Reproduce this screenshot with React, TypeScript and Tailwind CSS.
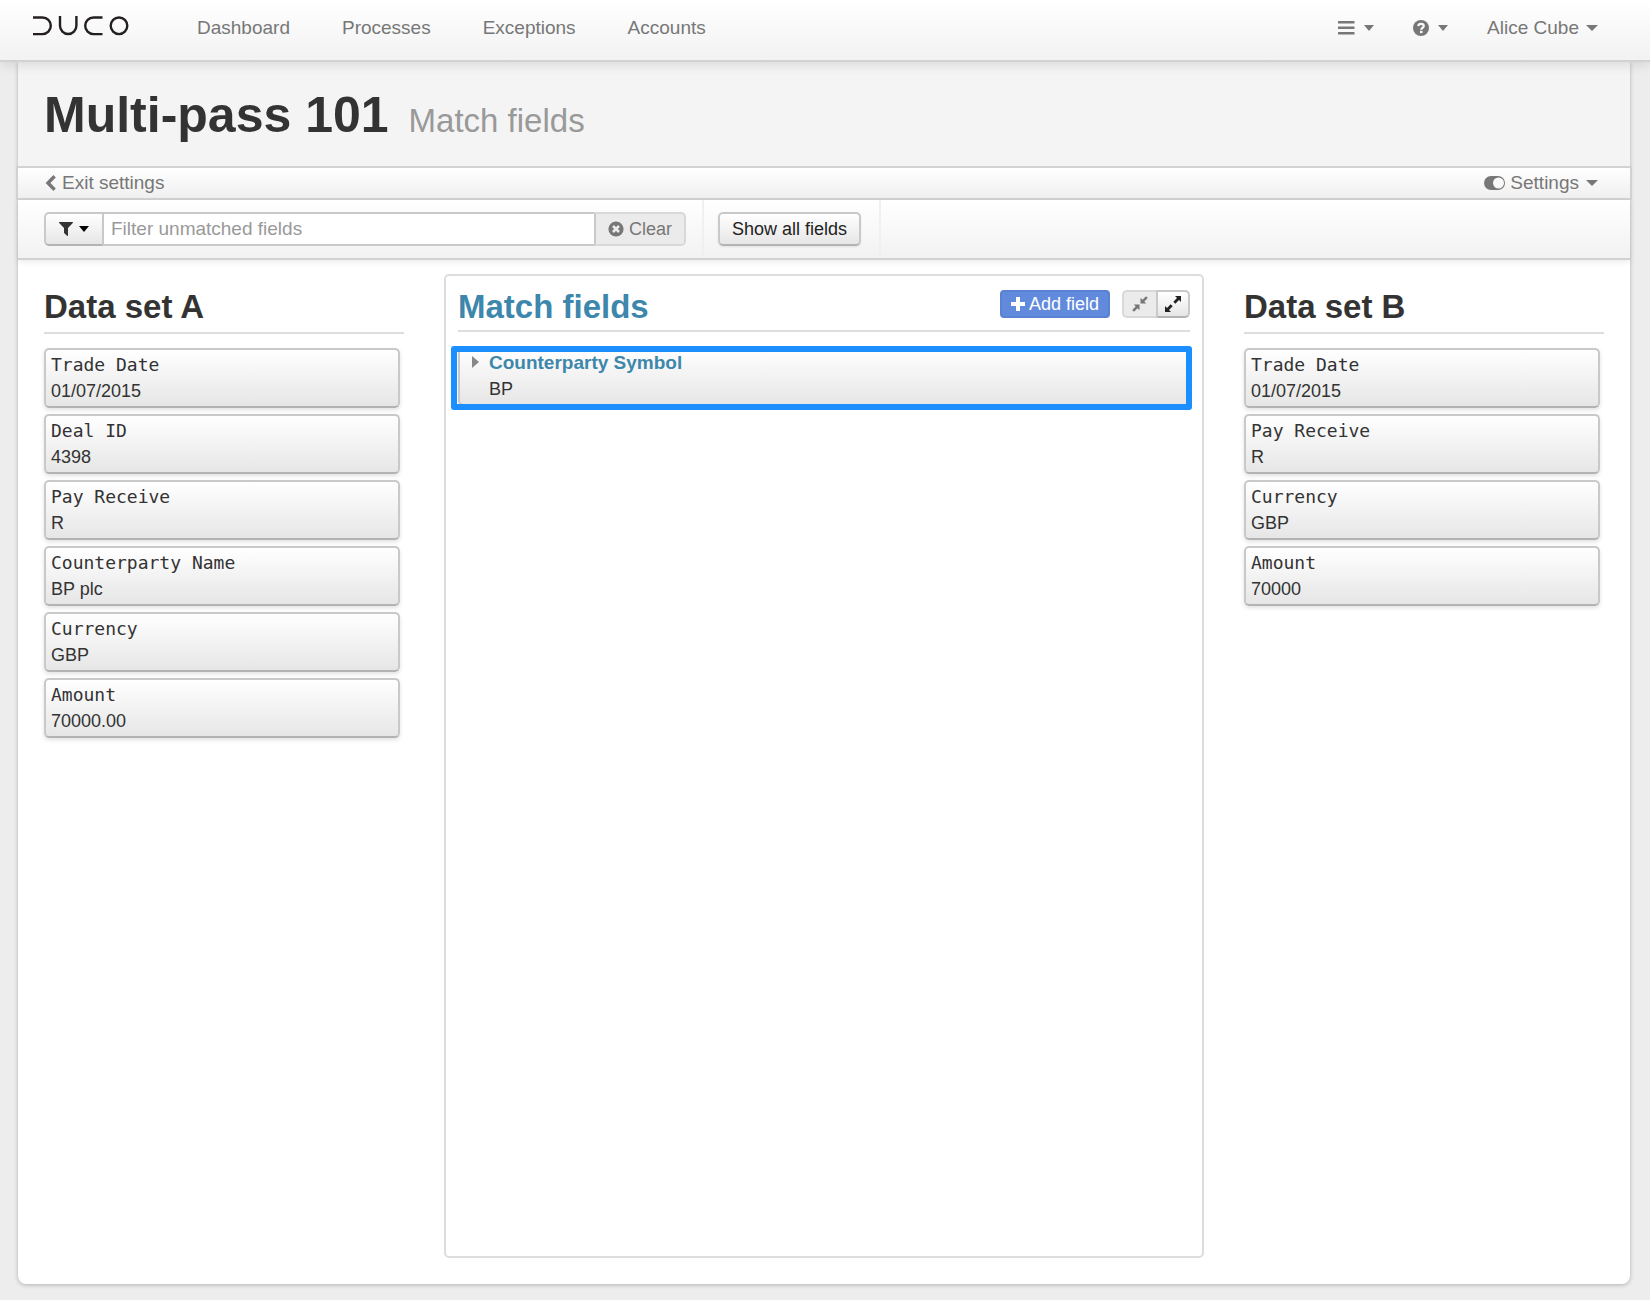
import React, { useState } from 'react';

type Field = { name: string; value: string };

const NAV_LINKS = ['Dashboard', 'Processes', 'Exceptions', 'Accounts'];

const DATA_SET_A: Field[] = [
  { name: 'Trade Date', value: '01/07/2015' },
  { name: 'Deal ID', value: '4398' },
  { name: 'Pay Receive', value: 'R' },
  { name: 'Counterparty Name', value: 'BP plc' },
  { name: 'Currency', value: 'GBP' },
  { name: 'Amount', value: '70000.00' },
];

const DATA_SET_B: Field[] = [
  { name: 'Trade Date', value: '01/07/2015' },
  { name: 'Pay Receive', value: 'R' },
  { name: 'Currency', value: 'GBP' },
  { name: 'Amount', value: '70000' },
];

const Logo = () => (
  <svg width="96" height="20" viewBox="0 0 96 20" fill="none" stroke="#231f20" strokeWidth="2.4">
    <path d="M0 1.500h9.500a8.300 8.300 0 0 1 0 16.600H0" />
    <path d="M27 0v9.800a8.200 8.200 0 0 0 16.400 0V0" />
    <path d="M69.500 1.500H60.500a8.300 8.300 0 0 0 0 16.600h9" />
    <circle cx="86" cy="9.8" r="8.3" />
  </svg>
);

const Caret = ({ small }: { small?: boolean }) =>
  small ? (
    <svg width="10" height="6" viewBox="0 0 10 6" fill="currentColor"><path d="M0 0h10L5 6z" /></svg>
  ) : (
    <svg width="12" height="6" viewBox="0 0 12 6" fill="currentColor"><path d="M0 0h12L6 6z" /></svg>
  );

const FieldCard = ({ field }: { field: Field }) => (
  <li className="rounded-[5px] border-2 border-[#c9c9c9] border-b-[#b3b3b3] bg-linear-to-b from-white to-[#e6e6e6] px-[5px] py-[2px] shadow-[0_2px_4px_rgba(0,0,0,0.12)]">
    <div className="font-['DejaVu_Sans_Mono',monospace] text-[18px] leading-[26px]">{field.name}</div>
    <div className="text-[18px] leading-[26px]">{field.value}</div>
  </li>
);

const DataSet = ({ title, fields }: { title: string; fields: Field[] }) => (
  <section className="pt-3">
    <h2 className="border-b-2 border-[#dddddd] pb-1 text-[33px] leading-[42px] font-bold">{title}</h2>
    <ul className="mt-[14px] mr-1 flex flex-col gap-[6px]">
      {fields.map((field) => (
        <FieldCard key={field.name} field={field} />
      ))}
    </ul>
  </section>
);

const App: React.FC = () => {
  const [filter, setFilter] = useState('');

  return (
    <div className="min-h-screen bg-[#ededed] pb-4 font-['Liberation_Sans',Arial,sans-serif] text-[#333333]">
      <header className="relative z-10 flex h-[62px] items-start border-b-2 border-[#d2d2d2] bg-linear-to-b from-white to-[#f2f2f2] pr-[52px] pl-[33px] shadow-[0_2px_12px_rgba(0,0,0,0.12)]">
        <a href="#home" aria-label="Duco" className="mt-4"><Logo /></a>
        <nav className="ml-[68px] flex gap-[52px] pt-4 text-[19px] leading-6 text-[#777777]">
          {NAV_LINKS.map((link) => (
            <a key={link} href={'#' + link.toLowerCase()}>{link}</a>
          ))}
        </nav>
        <div className="ml-auto flex items-center pt-4 text-[19px] leading-6 text-[#777777]">
          <button type="button" aria-label="Menu" className="flex h-6 items-center gap-[9px]">
            <svg width="17" height="14" viewBox="0 0 17 14" fill="currentColor">
              <rect width="16.500" height="2.500" rx=".5" y="0" />
              <rect width="16.500" height="2.500" rx=".5" y="5.500" />
              <rect width="16.500" height="2.500" rx=".5" y="11" />
            </svg>
            <Caret small />
          </button>
          <button type="button" aria-label="Help" className="ml-[39px] flex h-6 items-center gap-[9px]">
            <svg width="16" height="16" viewBox="0 0 16 16">
              <circle cx="8" cy="8" r="8" fill="currentColor" />
              <path d="M5.300 6.200C5.500 4.500 6.600 3.900 8 3.900c1.500 0 2.700.8 2.700 2.100 0 1.900-2.400 1.800-2.400 3.700" fill="none" stroke="#fafafa" strokeWidth="2.300" />
              <rect x="7" y="10.800" width="2.500" height="2.300" fill="#fafafa" />
            </svg>
            <Caret small />
          </button>
          <button type="button" className="ml-[39px] flex h-6 items-center gap-[7px]">
            Alice Cube <Caret />
          </button>
        </div>
      </header>

      <main className="mr-5 ml-[18px] rounded-b-lg bg-white pb-[26px] shadow-[0_1px_4px_rgba(0,0,0,0.25)]">
        <div className="flex h-[104px] items-baseline gap-5 bg-[#f4f4f4] px-[26px] pt-[23px]">
          <h1 className="text-[50px] leading-[60px] font-bold">Multi-pass 101</h1>
          <span className="text-[33px] text-[#999999]">Match fields</span>
        </div>

        <div className="-mx-[2px] flex h-[34px] items-center justify-between border-2 border-[#d2d2d2] bg-linear-to-b from-white to-[#f0f0f0] pr-8 pl-[27px] text-[19px] text-[#777777]">
          <a href="#exit" className="flex items-center gap-[6px]">
            <svg width="11" height="16" viewBox="0 0 11 16" fill="none" stroke="currentColor" strokeWidth="3.400"><path d="M9.600 1.300 3 8l6.600 6.700" /></svg>
            Exit settings
          </a>
          <button type="button" className="flex items-center gap-[5px]">
            <svg width="21" height="14" viewBox="0 0 21 14">
              <rect width="21" height="14" rx="7" fill="currentColor" />
              <circle cx="14.500" cy="7" r="5.500" fill="#fafafa" />
            </svg>
            <span className="flex items-center gap-[7px]">Settings <Caret /></span>
          </button>
        </div>

        <div className="flex h-[60px] border-b-2 border-[#d2d2d2] bg-linear-to-b from-white to-[#f2f2f2] pl-[26px] shadow-[0_2px_6px_rgba(0,0,0,0.08)]">
          <form className="flex h-[34px] w-[642px] self-center" onSubmit={(e) => e.preventDefault()}>
            <button type="button" aria-label="Filter by" className="flex w-[60px] items-center justify-center gap-[6px] rounded-l-[5px] border-2 border-[#c9c9c9] border-b-[#b3b3b3] bg-linear-to-b from-white to-[#e6e6e6]">
              <svg width="14" height="14" viewBox="0 0 14 14" fill="currentColor"><path d="M.6 0h12.800c.6 0 .8.700.4 1.100L9 6v7.400c0 .5-.6.700-1 .4l-2.700-2.500A1 1 0 0 1 5 10.600V6L.2 1.100C-.2.700 0 0 .6 0z" /></svg>
              <span className="text-black"><Caret small /></span>
            </button>
            <input
              type="text"
              aria-label="Filter unmatched fields"
              placeholder="Filter unmatched fields"
              value={filter}
              onChange={(e) => setFilter(e.target.value)}
              className="min-w-0 grow border-y-2 border-[#c9c9c9] bg-white px-[7px] text-[19px] outline-none placeholder:text-[#999999]"
            />
            <button type="button" onClick={() => setFilter('')} className="flex w-[92px] items-center justify-center gap-[5px] rounded-r-[5px] border-2 border-[#d8d8d8] border-l-[#c9c9c9] bg-[#ebebeb] text-[18px] text-[#777777]">
              <svg width="16" height="16" viewBox="0 0 16 16">
                <circle cx="8" cy="8" r="7.600" fill="currentColor" />
                <path d="m5 5 6 6m0-6-6 6" stroke="#ebebeb" strokeWidth="2.600" />
              </svg>
              Clear
            </button>
          </form>
          <div className="ml-4 flex items-center border-x-2 border-[#f0f0f0] pr-[18px] pl-[14px]">
            <button type="button" className="h-[34px] rounded-[5px] border-2 border-[#c9c9c9] border-b-[#b3b3b3] bg-linear-to-b from-white to-[#e6e6e6] px-3 text-[18px] text-[#222222] shadow-[0_1px_2px_rgba(0,0,0,0.08)]">
              Show all fields
            </button>
          </div>
        </div>

        <div className="grid grid-cols-[9fr_19fr_9fr] gap-10 px-[26px] pt-[14px]">
          <DataSet title="Data set A" fields={DATA_SET_A} />

          <section className="min-h-[984px] rounded-[5px] border-2 border-[#dddddd] px-3 pt-[10px]">
            <div className="flex items-start border-b-2 border-[#dddddd] pb-[2px]">
              <h2 className="text-[33px] leading-[42px] font-bold text-[#3d87ac]">Match fields</h2>
              <button type="button" className="mt-1 ml-auto flex h-7 items-center gap-1 rounded-[4px] border-2 border-[#5a82d2] bg-[#618add] px-[9px] text-[18px] text-white">
                <svg width="14" height="14" viewBox="0 0 14 14" stroke="currentColor" strokeWidth="4"><path d="M7 0v14M0 7h14" /></svg>
                Add field
              </button>
              <div className="mt-1 ml-3 flex h-7">
                <button type="button" aria-label="Collapse all" className="flex w-[34px] items-center justify-center rounded-l-[5px] border-2 border-r-0 border-[#d8d8d8] bg-[#ebebeb] text-[#777777]">
                  <svg width="16" height="16" viewBox="0 0 16 16" fill="currentColor">
                    <path d="M8.500 7.500V1.800l2 1.900L14 .2 15.800 2l-3.500 3.500 1.900 2zM7.500 8.500v5.700l-2-1.900L2 15.800.2 14l3.500-3.500-1.900-2z" />
                  </svg>
                </button>
                <button type="button" aria-label="Expand all" className="flex w-[34px] items-center justify-center rounded-r-[5px] border-2 border-[#c9c9c9] border-b-[#b3b3b3] bg-linear-to-b from-white to-[#e6e6e6] text-[#222222]">
                  <svg width="16" height="16" viewBox="0 0 16 16" fill="currentColor">
                    <path d="M16 0v6l-2-2-3.700 3.700-2-2L12 2l-2-2zM0 16v-6l2 2 3.700-3.700 2 2L4 14l2 2z" />
                  </svg>
                </button>
              </div>
            </div>

            <div className="relative mt-[14px]">
              <div className="flex items-start rounded-[5px] border-2 border-[#c9c9c9] border-b-[#b3b3b3] bg-linear-to-b from-white to-[#e6e6e6] px-3 py-[2px]">
                <button type="button" aria-label="Expand Counterparty Symbol" className="flex h-6 w-[17px] items-center text-[#888888]">
                  <svg width="7" height="12" viewBox="0 0 7 12" fill="currentColor"><path d="M0 0v12l7-6z" /></svg>
                </button>
                <div>
                  <div className="text-[19px] leading-[26px] font-bold text-[#3d87ac]">Counterparty Symbol</div>
                  <div className="text-[18px] leading-[26px]">BP</div>
                </div>
              </div>
              {/* selection frame over the card */}
              <div className="pointer-events-none absolute top-0 -right-[2px] -bottom-1 -left-[7px] rounded-[3px] border-6 border-[#1b8fff]" />
            </div>
          </section>

          <DataSet title="Data set B" fields={DATA_SET_B} />
        </div>
      </main>
    </div>
  );
};

export default App;
